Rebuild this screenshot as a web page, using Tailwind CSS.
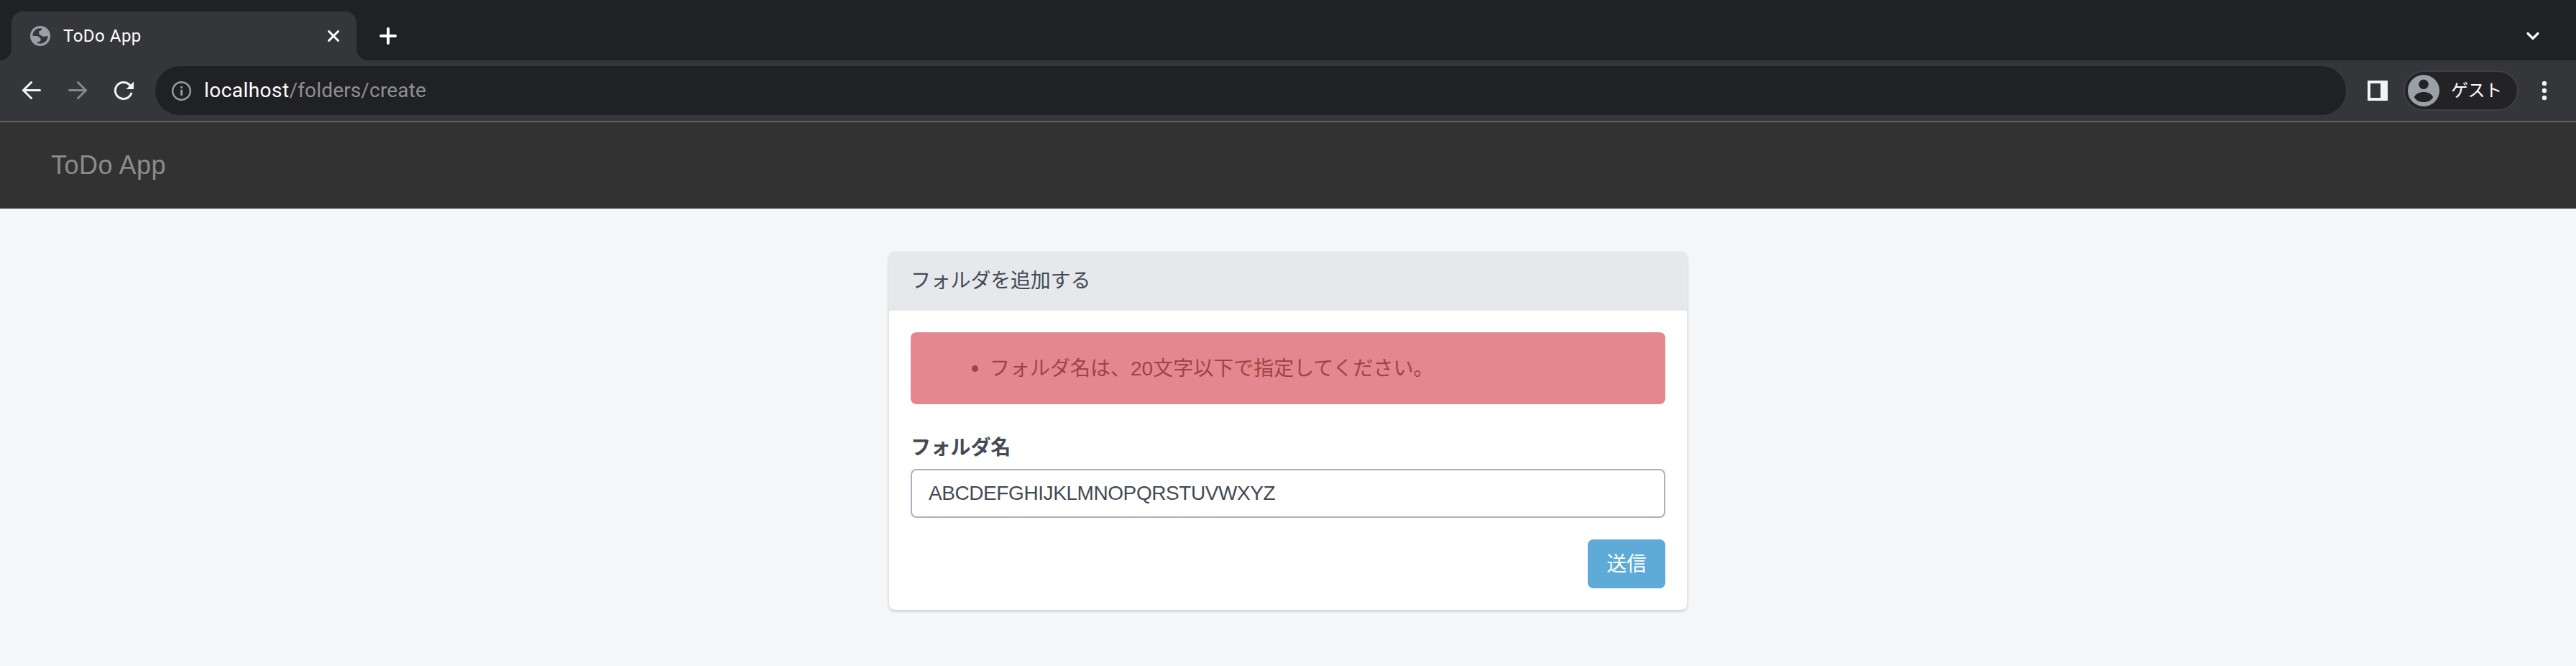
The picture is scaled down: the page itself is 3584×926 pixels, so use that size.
<!DOCTYPE html>
<html lang="ja">
<head>
<meta charset="utf-8">
<title>ToDo App</title>
<script src="https://cdn.jsdelivr.net/npm/@tailwindcss/browser@4"></script>
</head>
<body class="w-[3584px] h-[926px] overflow-hidden bg-[#f5f7f9] font-['Liberation_Sans','Noto_Sans_CJK_JP',sans-serif] text-[28px] text-[#434a54] flex flex-col">
<header class="shrink-0 bg-[#35363a] font-[Roboto,'Noto_Sans_CJK_JP',sans-serif]">
  <div class="h-[84px] bg-[#202124] flex items-end">
    <svg class="w-4 h-4 shrink-0" viewBox="0 0 16 16" fill="#35363a"><path d="M16 0v16H0A16 16 0 0 0 16 0z"/></svg>
    <div class="w-[480px] h-[68px] bg-[#35363a] rounded-t-[16px] flex items-center pl-[26px] pr-[22px]">
      <svg class="w-7 h-7 shrink-0" viewBox="0 0 28 28"><circle cx="14" cy="14" r="14" fill="#9aa0a6"/><path fill="#35363a" d="M3.300 13.800C3.300 8 8 3.300 14.300 3.300L15.800 3.600V6L12.200 7.200V10.500C12.200 13 15.500 12.500 17 14.500C18.500 15.500 21 14.500 24.600 13.800C24.600 20 20 24.700 14 24.700L10 23.900V22H13L14.500 20.500V18C14.500 16.500 12 16.500 11 14.300z"/></svg>
      <div class="ml-[18px] text-[24px] leading-8 tracking-[0.5px] text-white grow">ToDo App</div>
      <svg class="w-5 h-5" viewBox="0 0 20 20" stroke="#fff" stroke-width="3" stroke-linecap="round"><path d="M3.500 3.500l13 13M16.500 3.500l-13 13"/></svg>
    </div>
    <svg class="w-4 h-4 shrink-0" viewBox="0 0 16 16" fill="#35363a"><path d="M0 0v16h16A16 16 0 0 1 0 0z"/></svg>
    <svg class="w-6 h-6 ml-4 mb-[22px]" viewBox="0 0 24 24" stroke="#fff" stroke-width="4" stroke-linecap="round"><path d="M12 2v20M2 12h20"/></svg>
    <svg class="w-5 h-3 ml-auto mr-[50px] mb-7" viewBox="0 0 20 12" fill="none" stroke="#fff" stroke-width="3.200" stroke-linecap="round"><path d="M3 2.500l7 7 7-7"/></svg>
  </div>
  <div class="h-[84px] flex items-center pl-[30px]">
    <svg class="w-7 h-7" viewBox="0 0 28 28" fill="none" stroke="#f1f3f4" stroke-width="3" stroke-linecap="round"><path d="M25.500 13.500H3M13.500 2.500l-11 11 11 11"/></svg>
    <svg class="w-7 h-7 ml-9" viewBox="0 0 28 28" fill="none" stroke="#87888a" stroke-width="3" stroke-linecap="round"><path d="M2.500 13.500H25M14.500 2.500l11 11-11 11"/></svg>
    <svg class="w-7 h-7 ml-9" viewBox="0 0 28 28" fill="none" stroke="#f1f3f4" stroke-width="3" stroke-linecap="round"><path d="M22.500 6.300A11.500 11.500 0 1 0 24.600 18"/><path d="M28 1.500V12H17.500z" fill="#f1f3f4" stroke="none"/></svg>
    <div class="ml-[30px] w-[3048px] h-[68px] rounded-full bg-[#202124] flex items-center pl-[22px] text-[28px] text-[#8f9092]">
      <svg class="w-7 h-7" viewBox="0 0 28 28" fill="#9aa0a6"><circle cx="14.500" cy="14.500" r="12.300" fill="none" stroke="#9aa0a6" stroke-width="2.400"/><path d="M13.200 12.800h2.800v8h-2.800zM13.200 8h2.800v2.800h-2.800z"/></svg>
      <div class="ml-[18px] whitespace-nowrap tracking-[0.15px]"><span class="text-white tracking-[0.45px]">localhost</span>/folders/create</div>
    </div>
    <svg class="w-7 h-7 ml-[30px]" viewBox="0 0 28 28" fill="#f1f3f4"><path fill-rule="evenodd" d="M0 0h28v28H0zM4 4v20h14V4z"/></svg>
    <div class="ml-[22px] w-[160px] h-14 rounded-full border-2 border-[#3f4045] bg-[#232327] flex items-center pl-1">
      <svg class="w-11 h-11" viewBox="0 0 44 44"><circle cx="22" cy="22" r="22" fill="#9aa0a6"/><g fill="#232327"><circle cx="22" cy="13.300" r="6.700"/><path d="M8.800 31C11 26.500 16 24 22 24s11 2.500 13.200 7C33 35.500 28 38 22 38S11 35.500 8.800 31z"/></g></svg>
      <div class="ml-4 text-[24px] tracking-[-0.4px] text-white whitespace-nowrap">ゲスト</div>
    </div>
    <svg class="w-2 h-7 ml-[32px]" viewBox="0 0 8 28" fill="#f1f3f4"><circle cx="4" cy="4" r="3.200"/><circle cx="4" cy="14" r="3.200"/><circle cx="4" cy="24" r="3.200"/></svg>
  </div>
</header>
<nav class="h-[122px] shrink-0 bg-[#323232] border-t-2 border-[#5f6368] flex items-center pl-[71px] text-[36px] tracking-[0.5px] text-[#8c8c8c]"><a>ToDo App</a></nav>
<main class="pt-[60px] pl-[1237px]">
  <section class="w-[1110px] h-[498px] bg-white rounded-[8px] shadow-[0_2px_4px_rgba(0,0,0,0.2)] overflow-hidden">
    <h1 class="h-[82px] bg-[#e6e8ec] pl-[30px] pt-[21px] leading-[40px] tracking-[-0.2px]">フォルダを追加する</h1>
    <div class="p-[30px]">
      <div class="h-[100px] rounded-[8px] bg-[#e4878f] text-[#a04442] flex items-center pl-[85px]">
        <span class="w-[9px] h-[9px] rounded-full bg-[#a04442]"></span>
        <p class="ml-4 pt-0.5 whitespace-nowrap">フォルダ名は、20文字以下で指定してください。</p>
      </div>
      <label class="block pt-[41px] h-[90px] leading-[40px] font-bold tracking-[-0.2px]">フォルダ名</label>
      <div class="h-[68px] border-2 border-[#abb0bd] rounded-[8px] flex items-center pl-[23px] tracking-[-0.42px]"><span>ABCDEFGHIJKLMNOPQRSTUVWXYZ</span></div>
      <button class="block ml-auto mt-[30px] w-[108px] h-[68px] pt-0.5 rounded-[8px] bg-[#5dabd6] text-white tracking-[-0.2px]">送信</button>
    </div>
  </section>
</main>
</body>
</html>
